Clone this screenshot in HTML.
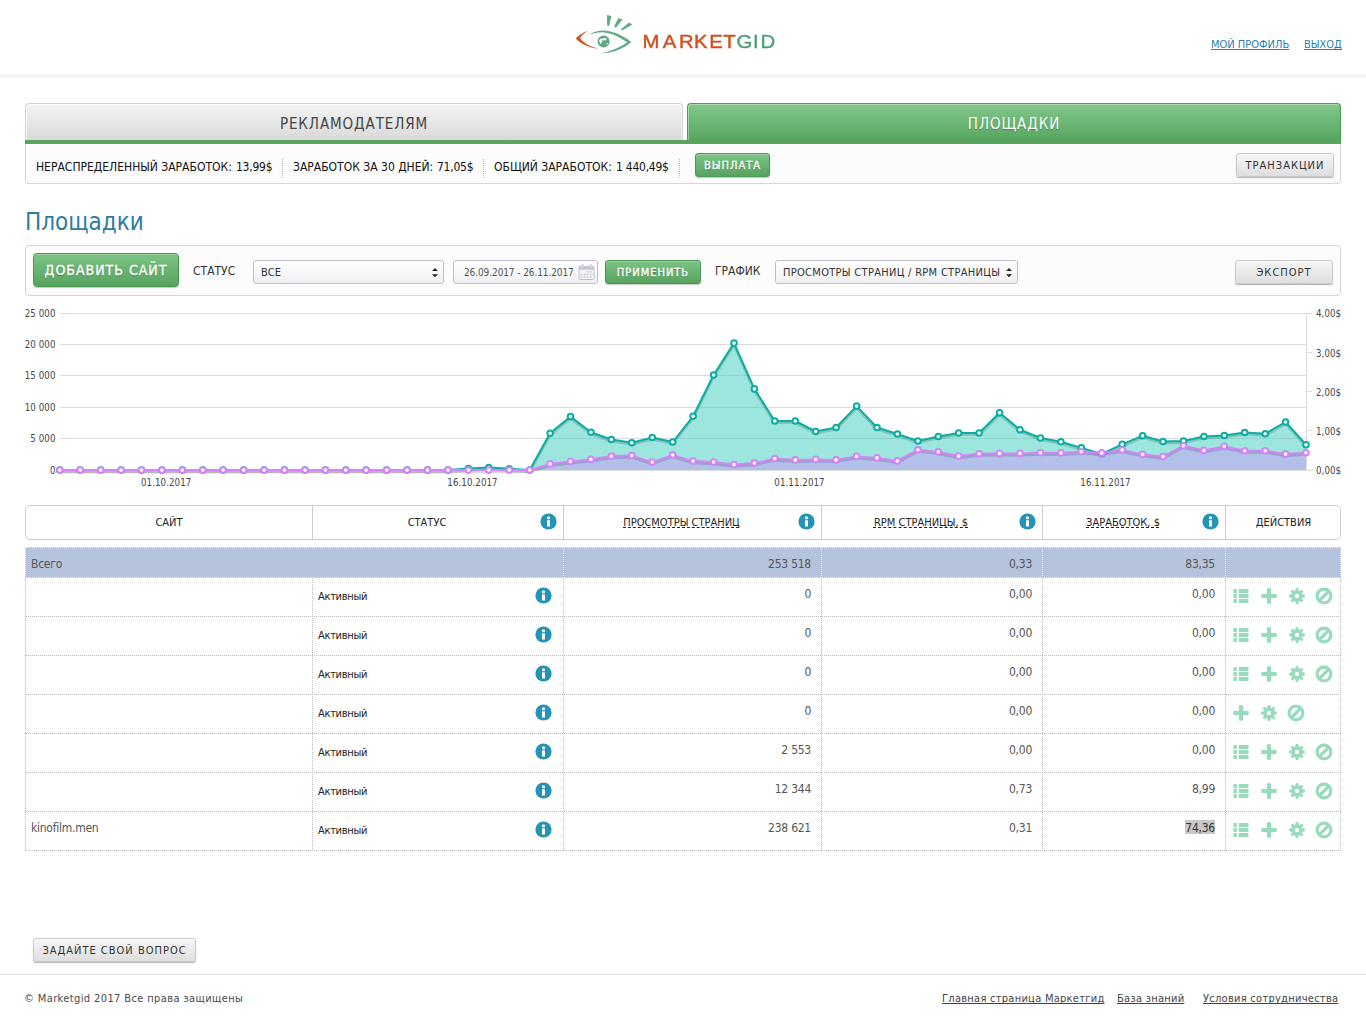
<!DOCTYPE html>
<html lang="ru">
<head>
<meta charset="utf-8">
<title>Площадки — Marketgid</title>
<style>
*{box-sizing:border-box;margin:0;padding:0}
html,body{width:1366px;height:1024px;overflow:hidden;background:#fff}
body{font-family:"DejaVu Sans Condensed","Liberation Sans",sans-serif;font-size:12px;color:#222;position:relative}
.abs{position:absolute;white-space:nowrap}
a{color:#2a7fa8;text-decoration-skip-ink:none}
#band{left:0;top:74px;width:1366px;height:4px;background:#f4f4f4}
#toplinks a{position:absolute;top:37px;font-size:11px;line-height:16px;color:#2a7fa8;text-decoration:underline;white-space:nowrap}
/* tabs */
#tab1{left:25px;top:103px;width:658px;height:37px;border:1px solid #d2d2d2;border-bottom:0;border-radius:4px 4px 0 0;background:linear-gradient(#f4f4f4,#d9d9d9);box-shadow:inset 1px 1px 0 rgba(255,255,255,.7),inset -1px 0 0 rgba(255,255,255,.5);text-align:center;font-size:15px;letter-spacing:.9px;line-height:41px;color:#444}
#tab2{left:687px;top:103px;width:654px;height:37px;border:1px solid #4c9a55;border-bottom:0;border-radius:4px 4px 0 0;background:linear-gradient(#81c78a,#58a660);box-shadow:inset 1px 1px 0 rgba(255,255,255,.35);text-align:center;font-size:15px;letter-spacing:.9px;line-height:41px;color:#fff;text-shadow:0 1px 1px rgba(0,0,0,.25)}
#gbar{left:25px;top:140px;width:1316px;height:4px;background:#57a55f}
#stats{left:25px;top:144px;width:1316px;height:40px;border:1px solid #d6d6d6;border-top:0;border-radius:0 0 4px 4px;background:#fcfcfc}
.nv{letter-spacing:-.25px}.st{top:159px;line-height:16px;font-size:12px;color:#111}
.sep{top:159px;width:0;height:19px;border-left:1px dotted #a9b6d4}
.gbtn{border:1px solid #4a9652;border-radius:3px;background:linear-gradient(#7cc485,#56a35e);color:#fff;text-align:center;letter-spacing:1px;text-shadow:0 1px 1px rgba(0,0,0,.35);-webkit-text-stroke:.35px #fff;box-shadow:inset 0 1px 0 rgba(255,255,255,.22),0 1px 1px rgba(0,0,0,.22)}
.wbtn{border:1px solid #c9c9c9;border-radius:3px;background:linear-gradient(#f6f6f6,#dedede);color:#333;text-align:center;letter-spacing:1px;box-shadow:inset 0 1px 0 rgba(255,255,255,.6),0 1px 1px rgba(0,0,0,.3)}
h1{position:absolute;left:25px;top:206px;font-size:24px;line-height:32px;font-weight:normal;color:#2b7ca3;white-space:nowrap}
#tools{left:25px;top:245px;width:1316px;height:51px;border:1px solid #d6d6d6;border-radius:4px;background:#fcfcfc}
.lbl{font-size:12px;line-height:16px;color:#333;top:263px}
.sel{top:260px;height:24px;border:1px solid #bebeca;border-radius:3px;background:linear-gradient(#fff,#f0f0f3);font-size:11px;line-height:23px;color:#333;padding-left:7px}
.arr{position:absolute;right:5px;top:6.8px;width:6px;height:9.2px}
/* table */
#thead{left:25px;top:505px;width:1316px;height:35px;border:1px solid #cdcdcd;border-radius:5px;background:#fff}
.th{top:506px;height:33px;line-height:34px;font-size:11px;color:#222;text-align:center}
.th span{text-decoration-skip-ink:none;text-decoration:underline dashed;text-decoration-thickness:1px;text-underline-offset:1px}
.vd{top:506px;width:1px;height:33px;background:#cdcdcd}
.row{left:25px;width:1316px;height:39px}
.hl{left:25px;width:1316px;height:0;border-top:1px dotted #bdbdbd}
.vl{width:0;border-left:1px dotted #bdbdbd}
.c{font-size:12px;line-height:16px;color:#555;text-align:right;letter-spacing:-.25px}
.s{font-size:11px;line-height:16px;color:#222;letter-spacing:-.3px}
#foot a{color:#444}
</style>
</head>
<body>
<svg class="abs" style="left:560px;top:0;will-change:transform" width="240" height="70" viewBox="560 0 240 70">
<path d="M587.6 30.6 C582.6 33 578.6 35.8 575.7 38.5 C581 44 589 47.8 598.4 48.7 C590 46.6 583.6 43 580 38.3 C582 35.4 584.6 32.8 587.6 30.6Z" fill="#d2541f"/>
<path d="M589 34.8 C594 31.6 599.5 30.4 604.5 30.6 C614 31.2 622.5 35.6 631.3 42 C623 49 612 53.4 600.6 53.2 C610 51.7 619.5 47.8 627.3 42.2 C619.5 37 612.5 33.3 604.5 32.4 C599 32 594 33 589 34.8Z" fill="#5fa985"/>
<circle cx="603.6" cy="41.5" r="6" fill="#5fa985"/>
<path d="M599 40.4Q599.6 39.2 600.7 38.7L606.7 38.1L605.7 40.4L604.9 40.6L603.2 40.2L602.2 40.6L601.6 42.9L600.6 44.3L599.9 42.2ZM605.9 44.3L607.5 43.1L608.1 44.5Z" fill="#fff"/>
<path d="M606.9 14.9L611.5 15.9L609 25.9L607.2 25.7Z" fill="#62ab87"/>
<path d="M618.2 18L622.6 19.5L615.9 27.7L614.1 26.7Z" fill="#62ab87"/>
<path d="M629 22.6L632.3 24.4L622.3 30.6L621 29.3Z" fill="#62ab87"/>
<text transform="scale(1 .935)" y="51.44" font-family="'Liberation Sans',sans-serif" font-size="20.3" stroke-width=".45"><tspan fill="#cf4f1d" stroke="#cf4f1d" x="642.4 662.8 678.9 694 709.3 723.3">MARKET</tspan><tspan fill="#4f9f77" stroke="#4f9f77" x="736.6 752.9 760.6">GID</tspan></text>
</svg>
<div id="toplinks"><a style="left:1211px">МОЙ ПРОФИЛЬ</a><a style="left:1304px">ВЫХОД</a></div>
<div id="band" class="abs"></div>
<div id="tab1" class="abs">РЕКЛАМОДАТЕЛЯМ</div>
<div id="gbar" class="abs"></div>
<div id="tab2" class="abs">ПЛОЩАДКИ</div>
<div id="stats" class="abs"></div>
<div class="abs st" style="left:36px">НЕРАСПРЕДЕЛЕННЫЙ ЗАРАБОТОК:</div><div class="abs st nv" id="v1" style="left:236px">13,99$</div>
<div class="abs sep" style="left:282px"></div>
<div class="abs st" style="left:293px">ЗАРАБОТОК ЗА 30 ДНЕЙ:</div><div class="abs st nv" id="v2" style="left:437px">71,05$</div>
<div class="abs sep" style="left:483px"></div>
<div class="abs st" style="left:494px">ОБЩИЙ ЗАРАБОТОК:</div><div class="abs st nv" id="v3" style="left:616px">1 440,49$</div>
<div class="abs sep" style="left:679px"></div>
<div class="abs gbtn" style="left:695px;top:153px;width:75px;height:24px;font-size:11px;line-height:24px">ВЫПЛАТА</div>
<div class="abs wbtn" style="left:1236px;top:153px;width:98px;height:24px;font-size:11px;line-height:24px">ТРАНЗАКЦИИ</div>
<h1>Площадки</h1>
<div id="tools" class="abs"></div>
<div class="abs gbtn" style="left:33px;top:253px;width:146px;height:34px;font-size:14px;line-height:32px;border-radius:4px">ДОБАВИТЬ САЙТ</div>
<div class="abs lbl" style="left:193px">СТАТУС</div>
<div class="abs sel" style="left:253px;width:191px">ВСЕ<svg class="arr" viewBox="0 0 6 9.2"><path d="M3 0L6 3H0zM3 9.2L0 6.2h6z" fill="#222"/></svg></div>
<div class="abs sel" style="left:453px;width:145px;font-size:10px;padding-left:10px;letter-spacing:-.1px;color:#555">26.09.2017 - 26.11.2017
<svg style="position:absolute;left:124px;top:3px" width="17" height="17" viewBox="0 0 17 17"><rect x="1" y="2.5" width="15" height="13" rx="1.2" fill="#f5f5f8" stroke="#c1c1cd"/><rect x="1" y="2.3" width="15" height="3.4" fill="#c3c3ce"/><rect x="3.6" y=".4" width="2.2" height="3.8" rx="1.1" fill="#e4e4ea" stroke="#c1c1cd" stroke-width=".7"/><rect x="11.6" y=".4" width="2.2" height="3.8" rx="1.1" fill="#e4e4ea" stroke="#c1c1cd" stroke-width=".7"/><g fill="#c9c9d4"><rect x="8.6" y="6.9" width="1.8" height="1.6"/><rect x="11.7" y="6.9" width="1.8" height="1.6"/><rect x="2.5" y="9.7" width="1.8" height="1.6"/><rect x="5.6" y="9.7" width="1.8" height="1.6"/><rect x="8.6" y="9.7" width="1.8" height="1.6"/><rect x="11.7" y="9.7" width="1.8" height="1.6"/><rect x="2.5" y="12.2" width="1.8" height="1.6"/><rect x="5.6" y="12.2" width="1.8" height="1.6"/><rect x="8.6" y="12.2" width="1.8" height="1.6"/><rect x="11.7" y="12.2" width="1.8" height="1.6"/></g></svg></div>
<div class="abs gbtn" style="left:605px;top:260px;width:96px;height:24px;font-size:11px;line-height:24px">ПРИМЕНИТЬ</div>
<div class="abs lbl" style="left:715px">ГРАФИК</div>
<div class="abs sel" style="left:775px;width:243px;letter-spacing:.3px">ПРОСМОТРЫ СТРАНИЦ / RPM СТРАНИЦЫ<svg class="arr" viewBox="0 0 6 9.2"><path d="M3 0L6 3H0zM3 9.2L0 6.2h6z" fill="#222"/></svg></div>
<div class="abs wbtn" style="left:1235px;top:260px;width:98px;height:24px;font-size:11px;line-height:24px">ЭКСПОРТ</div>
<svg class="abs" style="left:0;top:300px" width="1366" height="200" viewBox="0 300 1366 200" font-family="'DejaVu Sans Condensed','Liberation Sans',sans-serif" font-size="9.6" fill="#454545" letter-spacing=".1">
<rect x="60" y="313.0" width="1247" height="1" fill="#dcdcdc"/>
<rect x="60" y="344.0" width="1247" height="1" fill="#dcdcdc"/>
<rect x="60" y="375.0" width="1247" height="1" fill="#dcdcdc"/>
<rect x="60" y="407.0" width="1247" height="1" fill="#dcdcdc"/>
<rect x="60" y="438.0" width="1247" height="1" fill="#dcdcdc"/>
<rect x="60" y="470.0" width="1247" height="1" fill="#dcdcdc"/>
<rect x="1306" y="313" width="1" height="158" fill="#dcdcdc"/>
<rect x="1306" y="313.0" width="6" height="1" fill="#dcdcdc"/>
<rect x="1306" y="352.0" width="6" height="1" fill="#dcdcdc"/>
<rect x="1306" y="391.0" width="6" height="1" fill="#dcdcdc"/>
<rect x="1306" y="430.0" width="6" height="1" fill="#dcdcdc"/>
<rect x="1306" y="470.0" width="6" height="1" fill="#dcdcdc"/>
<text x="55.5" y="317.0" text-anchor="end">25 000</text>
<text x="55.5" y="348.0" text-anchor="end">20 000</text>
<text x="55.5" y="379.0" text-anchor="end">15 000</text>
<text x="55.5" y="411.0" text-anchor="end">10 000</text>
<text x="55.5" y="442.0" text-anchor="end">5 000</text>
<text x="55.5" y="474.0" text-anchor="end">0</text>
<text x="1316" y="317.0">4,00$</text>
<text x="1316" y="356.5">3,00$</text>
<text x="1316" y="396.1">2,00$</text>
<text x="1316" y="435.2">1,00$</text>
<text x="1316" y="474.2">0,00$</text>
<text x="166.2" y="485.8" text-anchor="middle">01.10.2017</text>
<text x="472.5" y="485.8" text-anchor="middle">16.10.2017</text>
<text x="799.5" y="485.8" text-anchor="middle">01.11.2017</text>
<text x="1105.5" y="485.8" text-anchor="middle">16.11.2017</text>
<path d="M59.8 470.1 L80.2 470.1 L100.7 470.1 L121.1 470.1 L141.5 470.1 L161.9 470.1 L182.4 470.1 L202.8 470.1 L223.2 470.1 L243.7 470.1 L264.1 470.1 L284.5 470.1 L305.0 470.1 L325.4 470.1 L345.8 470.1 L366.2 470.1 L386.7 470.1 L407.1 470.1 L427.5 470.1 L448.0 470.1 L468.4 468.6 L488.8 467.5 L509.3 468.8 L529.7 470.1 L550.1 433.2 L570.5 416.6 L591.0 432.2 L611.4 439.5 L631.8 442.7 L652.3 437.5 L672.7 442.0 L693.1 416.3 L713.6 375.0 L734.0 343.1 L754.4 388.9 L774.8 421.0 L795.3 421.0 L815.7 431.5 L836.1 427.5 L856.6 406.1 L877.0 427.5 L897.4 434.0 L917.9 441.0 L938.3 436.5 L958.7 433.0 L979.1 433.0 L999.6 412.8 L1020.0 429.8 L1040.4 438.0 L1060.9 441.7 L1081.3 447.9 L1101.7 453.9 L1122.2 444.4 L1142.6 435.7 L1163.0 441.5 L1183.5 441.0 L1203.9 436.5 L1224.3 435.5 L1244.7 432.5 L1265.2 433.7 L1285.6 422.0 L1306.0 444.7 L1306.0 470.1 L59.8 470.1 Z" fill="rgba(60,205,190,.5)"/>
<path d="M59.8 470.1 L80.2 470.1 L100.7 470.1 L121.1 470.1 L141.5 470.1 L161.9 470.1 L182.4 470.1 L202.8 470.1 L223.2 470.1 L243.7 470.1 L264.1 470.1 L284.5 470.1 L305.0 470.1 L325.4 470.1 L345.8 470.1 L366.2 470.1 L386.7 470.1 L407.1 470.1 L427.5 470.1 L448.0 470.1 L468.4 468.6 L488.8 467.5 L509.3 468.8 L529.7 470.1 L550.1 433.2 L570.5 416.6 L591.0 432.2 L611.4 439.5 L631.8 442.7 L652.3 437.5 L672.7 442.0 L693.1 416.3 L713.6 375.0 L734.0 343.1 L754.4 388.9 L774.8 421.0 L795.3 421.0 L815.7 431.5 L836.1 427.5 L856.6 406.1 L877.0 427.5 L897.4 434.0 L917.9 441.0 L938.3 436.5 L958.7 433.0 L979.1 433.0 L999.6 412.8 L1020.0 429.8 L1040.4 438.0 L1060.9 441.7 L1081.3 447.9 L1101.7 453.9 L1122.2 444.4 L1142.6 435.7 L1163.0 441.5 L1183.5 441.0 L1203.9 436.5 L1224.3 435.5 L1244.7 432.5 L1265.2 433.7 L1285.6 422.0 L1306.0 444.7" transform="translate(0,1.6)" fill="none" stroke="rgba(0,0,0,.15)" stroke-width="3" stroke-linejoin="round"/>
<path d="M59.8 470.1 L80.2 470.1 L100.7 470.1 L121.1 470.1 L141.5 470.1 L161.9 470.1 L182.4 470.1 L202.8 470.1 L223.2 470.1 L243.7 470.1 L264.1 470.1 L284.5 470.1 L305.0 470.1 L325.4 470.1 L345.8 470.1 L366.2 470.1 L386.7 470.1 L407.1 470.1 L427.5 470.1 L448.0 470.1 L468.4 468.6 L488.8 467.5 L509.3 468.8 L529.7 470.1 L550.1 433.2 L570.5 416.6 L591.0 432.2 L611.4 439.5 L631.8 442.7 L652.3 437.5 L672.7 442.0 L693.1 416.3 L713.6 375.0 L734.0 343.1 L754.4 388.9 L774.8 421.0 L795.3 421.0 L815.7 431.5 L836.1 427.5 L856.6 406.1 L877.0 427.5 L897.4 434.0 L917.9 441.0 L938.3 436.5 L958.7 433.0 L979.1 433.0 L999.6 412.8 L1020.0 429.8 L1040.4 438.0 L1060.9 441.7 L1081.3 447.9 L1101.7 453.9 L1122.2 444.4 L1142.6 435.7 L1163.0 441.5 L1183.5 441.0 L1203.9 436.5 L1224.3 435.5 L1244.7 432.5 L1265.2 433.7 L1285.6 422.0 L1306.0 444.7" fill="none" stroke="#0aaea2" stroke-width="2" stroke-linejoin="round"/>
<g fill="#fff" stroke="#0aaea2" stroke-width="2"><circle cx="59.8" cy="470.1" r="2.8"/><circle cx="80.2" cy="470.1" r="2.8"/><circle cx="100.7" cy="470.1" r="2.8"/><circle cx="121.1" cy="470.1" r="2.8"/><circle cx="141.5" cy="470.1" r="2.8"/><circle cx="161.9" cy="470.1" r="2.8"/><circle cx="182.4" cy="470.1" r="2.8"/><circle cx="202.8" cy="470.1" r="2.8"/><circle cx="223.2" cy="470.1" r="2.8"/><circle cx="243.7" cy="470.1" r="2.8"/><circle cx="264.1" cy="470.1" r="2.8"/><circle cx="284.5" cy="470.1" r="2.8"/><circle cx="305.0" cy="470.1" r="2.8"/><circle cx="325.4" cy="470.1" r="2.8"/><circle cx="345.8" cy="470.1" r="2.8"/><circle cx="366.2" cy="470.1" r="2.8"/><circle cx="386.7" cy="470.1" r="2.8"/><circle cx="407.1" cy="470.1" r="2.8"/><circle cx="427.5" cy="470.1" r="2.8"/><circle cx="448.0" cy="470.1" r="2.8"/><circle cx="468.4" cy="468.6" r="2.8"/><circle cx="488.8" cy="467.5" r="2.8"/><circle cx="509.3" cy="468.8" r="2.8"/><circle cx="529.7" cy="470.1" r="2.8"/><circle cx="550.1" cy="433.2" r="2.8"/><circle cx="570.5" cy="416.6" r="2.8"/><circle cx="591.0" cy="432.2" r="2.8"/><circle cx="611.4" cy="439.5" r="2.8"/><circle cx="631.8" cy="442.7" r="2.8"/><circle cx="652.3" cy="437.5" r="2.8"/><circle cx="672.7" cy="442.0" r="2.8"/><circle cx="693.1" cy="416.3" r="2.8"/><circle cx="713.6" cy="375.0" r="2.8"/><circle cx="734.0" cy="343.1" r="2.8"/><circle cx="754.4" cy="388.9" r="2.8"/><circle cx="774.8" cy="421.0" r="2.8"/><circle cx="795.3" cy="421.0" r="2.8"/><circle cx="815.7" cy="431.5" r="2.8"/><circle cx="836.1" cy="427.5" r="2.8"/><circle cx="856.6" cy="406.1" r="2.8"/><circle cx="877.0" cy="427.5" r="2.8"/><circle cx="897.4" cy="434.0" r="2.8"/><circle cx="917.9" cy="441.0" r="2.8"/><circle cx="938.3" cy="436.5" r="2.8"/><circle cx="958.7" cy="433.0" r="2.8"/><circle cx="979.1" cy="433.0" r="2.8"/><circle cx="999.6" cy="412.8" r="2.8"/><circle cx="1020.0" cy="429.8" r="2.8"/><circle cx="1040.4" cy="438.0" r="2.8"/><circle cx="1060.9" cy="441.7" r="2.8"/><circle cx="1081.3" cy="447.9" r="2.8"/><circle cx="1101.7" cy="453.9" r="2.8"/><circle cx="1122.2" cy="444.4" r="2.8"/><circle cx="1142.6" cy="435.7" r="2.8"/><circle cx="1163.0" cy="441.5" r="2.8"/><circle cx="1183.5" cy="441.0" r="2.8"/><circle cx="1203.9" cy="436.5" r="2.8"/><circle cx="1224.3" cy="435.5" r="2.8"/><circle cx="1244.7" cy="432.5" r="2.8"/><circle cx="1265.2" cy="433.7" r="2.8"/><circle cx="1285.6" cy="422.0" r="2.8"/><circle cx="1306.0" cy="444.7" r="2.8"/></g>
<path d="M59.8 470.1 L80.2 470.1 L100.7 470.1 L121.1 470.1 L141.5 470.1 L161.9 470.1 L182.4 470.1 L202.8 470.1 L223.2 470.1 L243.7 470.1 L264.1 470.1 L284.5 470.1 L305.0 470.1 L325.4 470.1 L345.8 470.1 L366.2 470.1 L386.7 470.1 L407.1 470.1 L427.5 470.1 L448.0 470.1 L468.4 470.1 L488.8 470.1 L509.3 470.1 L529.7 470.1 L550.1 463.9 L570.5 461.4 L591.0 459.4 L611.4 456.1 L631.8 455.6 L652.3 462.1 L672.7 455.1 L693.1 461.1 L713.6 462.1 L734.0 464.6 L754.4 463.1 L774.8 458.6 L795.3 459.9 L815.7 459.4 L836.1 459.9 L856.6 456.4 L877.0 457.9 L897.4 460.9 L917.9 449.7 L938.3 451.9 L958.7 456.1 L979.1 453.7 L999.6 453.4 L1020.0 453.4 L1040.4 452.7 L1060.9 452.9 L1081.3 451.7 L1101.7 452.9 L1122.2 449.9 L1142.6 454.4 L1163.0 456.6 L1183.5 445.7 L1203.9 450.4 L1224.3 446.4 L1244.7 450.7 L1265.2 450.7 L1285.6 454.1 L1306.0 452.7 L1306.0 470.1 L59.8 470.1 Z" fill="rgba(200,153,246,.5)"/>
<path d="M59.8 470.1 L80.2 470.1 L100.7 470.1 L121.1 470.1 L141.5 470.1 L161.9 470.1 L182.4 470.1 L202.8 470.1 L223.2 470.1 L243.7 470.1 L264.1 470.1 L284.5 470.1 L305.0 470.1 L325.4 470.1 L345.8 470.1 L366.2 470.1 L386.7 470.1 L407.1 470.1 L427.5 470.1 L448.0 470.1 L468.4 470.1 L488.8 470.1 L509.3 470.1 L529.7 470.1 L550.1 463.9 L570.5 461.4 L591.0 459.4 L611.4 456.1 L631.8 455.6 L652.3 462.1 L672.7 455.1 L693.1 461.1 L713.6 462.1 L734.0 464.6 L754.4 463.1 L774.8 458.6 L795.3 459.9 L815.7 459.4 L836.1 459.9 L856.6 456.4 L877.0 457.9 L897.4 460.9 L917.9 449.7 L938.3 451.9 L958.7 456.1 L979.1 453.7 L999.6 453.4 L1020.0 453.4 L1040.4 452.7 L1060.9 452.9 L1081.3 451.7 L1101.7 452.9 L1122.2 449.9 L1142.6 454.4 L1163.0 456.6 L1183.5 445.7 L1203.9 450.4 L1224.3 446.4 L1244.7 450.7 L1265.2 450.7 L1285.6 454.1 L1306.0 452.7" transform="translate(0,1.6)" fill="none" stroke="rgba(0,0,0,.15)" stroke-width="3" stroke-linejoin="round"/>
<path d="M59.8 470.1 L80.2 470.1 L100.7 470.1 L121.1 470.1 L141.5 470.1 L161.9 470.1 L182.4 470.1 L202.8 470.1 L223.2 470.1 L243.7 470.1 L264.1 470.1 L284.5 470.1 L305.0 470.1 L325.4 470.1 L345.8 470.1 L366.2 470.1 L386.7 470.1 L407.1 470.1 L427.5 470.1 L448.0 470.1 L468.4 470.1 L488.8 470.1 L509.3 470.1 L529.7 470.1 L550.1 463.9 L570.5 461.4 L591.0 459.4 L611.4 456.1 L631.8 455.6 L652.3 462.1 L672.7 455.1 L693.1 461.1 L713.6 462.1 L734.0 464.6 L754.4 463.1 L774.8 458.6 L795.3 459.9 L815.7 459.4 L836.1 459.9 L856.6 456.4 L877.0 457.9 L897.4 460.9 L917.9 449.7 L938.3 451.9 L958.7 456.1 L979.1 453.7 L999.6 453.4 L1020.0 453.4 L1040.4 452.7 L1060.9 452.9 L1081.3 451.7 L1101.7 452.9 L1122.2 449.9 L1142.6 454.4 L1163.0 456.6 L1183.5 445.7 L1203.9 450.4 L1224.3 446.4 L1244.7 450.7 L1265.2 450.7 L1285.6 454.1 L1306.0 452.7" fill="none" stroke="#d682fa" stroke-width="2" stroke-linejoin="round"/>
<g fill="#fff" stroke="#d682fa" stroke-width="2"><circle cx="59.8" cy="470.1" r="2.8"/><circle cx="80.2" cy="470.1" r="2.8"/><circle cx="100.7" cy="470.1" r="2.8"/><circle cx="121.1" cy="470.1" r="2.8"/><circle cx="141.5" cy="470.1" r="2.8"/><circle cx="161.9" cy="470.1" r="2.8"/><circle cx="182.4" cy="470.1" r="2.8"/><circle cx="202.8" cy="470.1" r="2.8"/><circle cx="223.2" cy="470.1" r="2.8"/><circle cx="243.7" cy="470.1" r="2.8"/><circle cx="264.1" cy="470.1" r="2.8"/><circle cx="284.5" cy="470.1" r="2.8"/><circle cx="305.0" cy="470.1" r="2.8"/><circle cx="325.4" cy="470.1" r="2.8"/><circle cx="345.8" cy="470.1" r="2.8"/><circle cx="366.2" cy="470.1" r="2.8"/><circle cx="386.7" cy="470.1" r="2.8"/><circle cx="407.1" cy="470.1" r="2.8"/><circle cx="427.5" cy="470.1" r="2.8"/><circle cx="448.0" cy="470.1" r="2.8"/><circle cx="468.4" cy="470.1" r="2.8"/><circle cx="488.8" cy="470.1" r="2.8"/><circle cx="509.3" cy="470.1" r="2.8"/><circle cx="529.7" cy="470.1" r="2.8"/><circle cx="550.1" cy="463.9" r="2.8"/><circle cx="570.5" cy="461.4" r="2.8"/><circle cx="591.0" cy="459.4" r="2.8"/><circle cx="611.4" cy="456.1" r="2.8"/><circle cx="631.8" cy="455.6" r="2.8"/><circle cx="652.3" cy="462.1" r="2.8"/><circle cx="672.7" cy="455.1" r="2.8"/><circle cx="693.1" cy="461.1" r="2.8"/><circle cx="713.6" cy="462.1" r="2.8"/><circle cx="734.0" cy="464.6" r="2.8"/><circle cx="754.4" cy="463.1" r="2.8"/><circle cx="774.8" cy="458.6" r="2.8"/><circle cx="795.3" cy="459.9" r="2.8"/><circle cx="815.7" cy="459.4" r="2.8"/><circle cx="836.1" cy="459.9" r="2.8"/><circle cx="856.6" cy="456.4" r="2.8"/><circle cx="877.0" cy="457.9" r="2.8"/><circle cx="897.4" cy="460.9" r="2.8"/><circle cx="917.9" cy="449.7" r="2.8"/><circle cx="938.3" cy="451.9" r="2.8"/><circle cx="958.7" cy="456.1" r="2.8"/><circle cx="979.1" cy="453.7" r="2.8"/><circle cx="999.6" cy="453.4" r="2.8"/><circle cx="1020.0" cy="453.4" r="2.8"/><circle cx="1040.4" cy="452.7" r="2.8"/><circle cx="1060.9" cy="452.9" r="2.8"/><circle cx="1081.3" cy="451.7" r="2.8"/><circle cx="1101.7" cy="452.9" r="2.8"/><circle cx="1122.2" cy="449.9" r="2.8"/><circle cx="1142.6" cy="454.4" r="2.8"/><circle cx="1163.0" cy="456.6" r="2.8"/><circle cx="1183.5" cy="445.7" r="2.8"/><circle cx="1203.9" cy="450.4" r="2.8"/><circle cx="1224.3" cy="446.4" r="2.8"/><circle cx="1244.7" cy="450.7" r="2.8"/><circle cx="1265.2" cy="450.7" r="2.8"/><circle cx="1285.6" cy="454.1" r="2.8"/><circle cx="1306.0" cy="452.7" r="2.8"/></g>
</svg>
<div id="thead" class="abs"></div>
<div class="abs vd" style="left:312px"></div>
<div class="abs vd" style="left:563px"></div>
<div class="abs vd" style="left:821px"></div>
<div class="abs vd" style="left:1042px"></div>
<div class="abs vd" style="left:1225px"></div>
<div class="abs th" style="left:26px;width:286px;padding-right:0px">САЙТ</div>
<div class="abs th" style="left:313px;width:250px;padding-right:22px">СТАТУС</div>
<div class="abs th" style="left:564px;width:257px;padding-right:22px"><span>ПРОСМОТРЫ СТРАНИЦ</span></div>
<div class="abs th" style="left:822px;width:220px;padding-right:22px"><span>RPM СТРАНИЦЫ, $</span></div>
<div class="abs th" style="left:1043px;width:182px;padding-right:22px"><span>ЗАРАБОТОК, $</span></div>
<div class="abs th" style="left:1226px;width:115px;padding-right:0px">ДЕЙСТВИЯ</div>
<svg class="abs" style="left:540px;top:513px" width="17" height="17" viewBox="0 0 17 17"><circle cx="8.5" cy="8.5" r="8.1" fill="#2592b7"/><rect x="7" y="3.6" width="3" height="2.6" rx=".8" fill="#fff"/><rect x="7" y="7.2" width="3" height="6.2" rx=".5" fill="#fff"/></svg>
<svg class="abs" style="left:798px;top:513px" width="17" height="17" viewBox="0 0 17 17"><circle cx="8.5" cy="8.5" r="8.1" fill="#2592b7"/><rect x="7" y="3.6" width="3" height="2.6" rx=".8" fill="#fff"/><rect x="7" y="7.2" width="3" height="6.2" rx=".5" fill="#fff"/></svg>
<svg class="abs" style="left:1019px;top:513px" width="17" height="17" viewBox="0 0 17 17"><circle cx="8.5" cy="8.5" r="8.1" fill="#2592b7"/><rect x="7" y="3.6" width="3" height="2.6" rx=".8" fill="#fff"/><rect x="7" y="7.2" width="3" height="6.2" rx=".5" fill="#fff"/></svg>
<svg class="abs" style="left:1202px;top:513px" width="17" height="17" viewBox="0 0 17 17"><circle cx="8.5" cy="8.5" r="8.1" fill="#2592b7"/><rect x="7" y="3.6" width="3" height="2.6" rx=".8" fill="#fff"/><rect x="7" y="7.2" width="3" height="6.2" rx=".5" fill="#fff"/></svg>
<div class="abs" style="left:25px;top:547px;width:1316px;height:31px;background:#b5c3dc"></div>
<div class="abs hl" style="top:547px;border-color:#e8ecf4"></div>
<div class="abs hl" style="top:577px;border-color:#e8ecf4"></div>
<div class="abs vl" style="left:25px;top:547px;height:31px;border-color:#e8ecf4"></div>
<div class="abs vl" style="left:563px;top:547px;height:31px;border-color:#e8ecf4"></div>
<div class="abs vl" style="left:821px;top:547px;height:31px;border-color:#e8ecf4"></div>
<div class="abs vl" style="left:1042px;top:547px;height:31px;border-color:#e8ecf4"></div>
<div class="abs vl" style="left:1225px;top:547px;height:31px;border-color:#e8ecf4"></div>
<div class="abs vl" style="left:1340px;top:547px;height:31px;border-color:#e8ecf4"></div>
<div class="abs c" style="left:31px;top:556px;text-align:left">Всего</div>
<div class="abs c" style="right:555px;top:556px">253 518</div>
<div class="abs c" style="right:334px;top:556px">0,33</div>
<div class="abs c" style="right:151px;top:556px">83,35</div>
<div class="abs hl" style="top:616px"></div>
<div class="abs s" style="left:318px;top:589px">Активный</div>
<svg class="abs" style="left:535px;top:587px" width="17" height="17" viewBox="0 0 17 17"><circle cx="8.5" cy="8.5" r="8.1" fill="#2592b7"/><rect x="7" y="3.6" width="3" height="2.6" rx=".8" fill="#fff"/><rect x="7" y="7.2" width="3" height="6.2" rx=".5" fill="#fff"/></svg>
<div class="abs c" style="right:555px;top:586px">0</div>
<div class="abs c" style="right:334px;top:586px">0,00</div>
<div class="abs c" style="right:151px;top:586px">0,00</div>
<svg class="abs" style="left:1233px;top:588px" width="16" height="16" viewBox="0 0 16 16" fill="#97dbbc"><rect x=".4" y=".9" width="3.5" height="4" rx=".6"/><rect x="5.7" y=".9" width="9.8" height="4" rx=".6"/><rect x=".4" y="6" width="3.5" height="4" rx=".6"/><rect x="5.7" y="6" width="9.8" height="4" rx=".6"/><rect x=".4" y="11.1" width="3.5" height="4" rx=".6"/><rect x="5.7" y="11.1" width="9.8" height="4" rx=".6"/></svg>
<svg class="abs" style="left:1261px;top:588px" width="16" height="16" viewBox="0 0 16 16" fill="#97dbbc"><rect x="5.9" y="0.3" width="4.2" height="15.4" rx=".8"/><rect x="0.3" y="5.9" width="15.4" height="4.2" rx=".8"/></svg>
<svg class="abs" style="left:1289px;top:588px" width="16" height="16" viewBox="0 0 16 16"><path fill="#97dbbc" fill-rule="evenodd" stroke="#97dbbc" stroke-width="1" stroke-linejoin="round" d="M6.74 2.85 L7.10 0.55 L8.90 0.55 L9.26 2.85 L10.75 3.47 L12.63 2.10 L13.90 3.37 L12.53 5.25 L13.15 6.74 L15.45 7.10 L15.45 8.90 L13.15 9.26 L12.53 10.75 L13.90 12.63 L12.63 13.90 L10.75 12.53 L9.26 13.15 L8.90 15.45 L7.10 15.45 L6.74 13.15 L5.25 12.53 L3.37 13.90 L2.10 12.63 L3.47 10.75 L2.85 9.26 L0.55 8.90 L0.55 7.10 L2.85 6.74 L3.47 5.25 L2.10 3.37 L3.37 2.10 L5.25 3.47Z M8 5.3 A2.7 2.7 0 1 0 8 10.7 A2.7 2.7 0 1 0 8 5.3Z"/></svg>
<svg class="abs" style="left:1315px;top:587px" width="18" height="18" viewBox="0 0 18 18"><circle cx="9" cy="9" r="6.9" fill="none" stroke="#97dbbc" stroke-width="3.1"/><path d="M13.6 4.4L4.4 13.6" stroke="#97dbbc" stroke-width="3.3"/></svg>
<div class="abs hl" style="top:655px"></div>
<div class="abs s" style="left:318px;top:628px">Активный</div>
<svg class="abs" style="left:535px;top:626px" width="17" height="17" viewBox="0 0 17 17"><circle cx="8.5" cy="8.5" r="8.1" fill="#2592b7"/><rect x="7" y="3.6" width="3" height="2.6" rx=".8" fill="#fff"/><rect x="7" y="7.2" width="3" height="6.2" rx=".5" fill="#fff"/></svg>
<div class="abs c" style="right:555px;top:625px">0</div>
<div class="abs c" style="right:334px;top:625px">0,00</div>
<div class="abs c" style="right:151px;top:625px">0,00</div>
<svg class="abs" style="left:1233px;top:627px" width="16" height="16" viewBox="0 0 16 16" fill="#97dbbc"><rect x=".4" y=".9" width="3.5" height="4" rx=".6"/><rect x="5.7" y=".9" width="9.8" height="4" rx=".6"/><rect x=".4" y="6" width="3.5" height="4" rx=".6"/><rect x="5.7" y="6" width="9.8" height="4" rx=".6"/><rect x=".4" y="11.1" width="3.5" height="4" rx=".6"/><rect x="5.7" y="11.1" width="9.8" height="4" rx=".6"/></svg>
<svg class="abs" style="left:1261px;top:627px" width="16" height="16" viewBox="0 0 16 16" fill="#97dbbc"><rect x="5.9" y="0.3" width="4.2" height="15.4" rx=".8"/><rect x="0.3" y="5.9" width="15.4" height="4.2" rx=".8"/></svg>
<svg class="abs" style="left:1289px;top:627px" width="16" height="16" viewBox="0 0 16 16"><path fill="#97dbbc" fill-rule="evenodd" stroke="#97dbbc" stroke-width="1" stroke-linejoin="round" d="M6.74 2.85 L7.10 0.55 L8.90 0.55 L9.26 2.85 L10.75 3.47 L12.63 2.10 L13.90 3.37 L12.53 5.25 L13.15 6.74 L15.45 7.10 L15.45 8.90 L13.15 9.26 L12.53 10.75 L13.90 12.63 L12.63 13.90 L10.75 12.53 L9.26 13.15 L8.90 15.45 L7.10 15.45 L6.74 13.15 L5.25 12.53 L3.37 13.90 L2.10 12.63 L3.47 10.75 L2.85 9.26 L0.55 8.90 L0.55 7.10 L2.85 6.74 L3.47 5.25 L2.10 3.37 L3.37 2.10 L5.25 3.47Z M8 5.3 A2.7 2.7 0 1 0 8 10.7 A2.7 2.7 0 1 0 8 5.3Z"/></svg>
<svg class="abs" style="left:1315px;top:626px" width="18" height="18" viewBox="0 0 18 18"><circle cx="9" cy="9" r="6.9" fill="none" stroke="#97dbbc" stroke-width="3.1"/><path d="M13.6 4.4L4.4 13.6" stroke="#97dbbc" stroke-width="3.3"/></svg>
<div class="abs hl" style="top:694px"></div>
<div class="abs s" style="left:318px;top:667px">Активный</div>
<svg class="abs" style="left:535px;top:665px" width="17" height="17" viewBox="0 0 17 17"><circle cx="8.5" cy="8.5" r="8.1" fill="#2592b7"/><rect x="7" y="3.6" width="3" height="2.6" rx=".8" fill="#fff"/><rect x="7" y="7.2" width="3" height="6.2" rx=".5" fill="#fff"/></svg>
<div class="abs c" style="right:555px;top:664px">0</div>
<div class="abs c" style="right:334px;top:664px">0,00</div>
<div class="abs c" style="right:151px;top:664px">0,00</div>
<svg class="abs" style="left:1233px;top:666px" width="16" height="16" viewBox="0 0 16 16" fill="#97dbbc"><rect x=".4" y=".9" width="3.5" height="4" rx=".6"/><rect x="5.7" y=".9" width="9.8" height="4" rx=".6"/><rect x=".4" y="6" width="3.5" height="4" rx=".6"/><rect x="5.7" y="6" width="9.8" height="4" rx=".6"/><rect x=".4" y="11.1" width="3.5" height="4" rx=".6"/><rect x="5.7" y="11.1" width="9.8" height="4" rx=".6"/></svg>
<svg class="abs" style="left:1261px;top:666px" width="16" height="16" viewBox="0 0 16 16" fill="#97dbbc"><rect x="5.9" y="0.3" width="4.2" height="15.4" rx=".8"/><rect x="0.3" y="5.9" width="15.4" height="4.2" rx=".8"/></svg>
<svg class="abs" style="left:1289px;top:666px" width="16" height="16" viewBox="0 0 16 16"><path fill="#97dbbc" fill-rule="evenodd" stroke="#97dbbc" stroke-width="1" stroke-linejoin="round" d="M6.74 2.85 L7.10 0.55 L8.90 0.55 L9.26 2.85 L10.75 3.47 L12.63 2.10 L13.90 3.37 L12.53 5.25 L13.15 6.74 L15.45 7.10 L15.45 8.90 L13.15 9.26 L12.53 10.75 L13.90 12.63 L12.63 13.90 L10.75 12.53 L9.26 13.15 L8.90 15.45 L7.10 15.45 L6.74 13.15 L5.25 12.53 L3.37 13.90 L2.10 12.63 L3.47 10.75 L2.85 9.26 L0.55 8.90 L0.55 7.10 L2.85 6.74 L3.47 5.25 L2.10 3.37 L3.37 2.10 L5.25 3.47Z M8 5.3 A2.7 2.7 0 1 0 8 10.7 A2.7 2.7 0 1 0 8 5.3Z"/></svg>
<svg class="abs" style="left:1315px;top:665px" width="18" height="18" viewBox="0 0 18 18"><circle cx="9" cy="9" r="6.9" fill="none" stroke="#97dbbc" stroke-width="3.1"/><path d="M13.6 4.4L4.4 13.6" stroke="#97dbbc" stroke-width="3.3"/></svg>
<div class="abs hl" style="top:733px"></div>
<div class="abs s" style="left:318px;top:706px">Активный</div>
<svg class="abs" style="left:535px;top:704px" width="17" height="17" viewBox="0 0 17 17"><circle cx="8.5" cy="8.5" r="8.1" fill="#2592b7"/><rect x="7" y="3.6" width="3" height="2.6" rx=".8" fill="#fff"/><rect x="7" y="7.2" width="3" height="6.2" rx=".5" fill="#fff"/></svg>
<div class="abs c" style="right:555px;top:703px">0</div>
<div class="abs c" style="right:334px;top:703px">0,00</div>
<div class="abs c" style="right:151px;top:703px">0,00</div>
<svg class="abs" style="left:1233px;top:705px" width="16" height="16" viewBox="0 0 16 16" fill="#97dbbc"><rect x="5.9" y="0.3" width="4.2" height="15.4" rx=".8"/><rect x="0.3" y="5.9" width="15.4" height="4.2" rx=".8"/></svg>
<svg class="abs" style="left:1261px;top:705px" width="16" height="16" viewBox="0 0 16 16"><path fill="#97dbbc" fill-rule="evenodd" stroke="#97dbbc" stroke-width="1" stroke-linejoin="round" d="M6.74 2.85 L7.10 0.55 L8.90 0.55 L9.26 2.85 L10.75 3.47 L12.63 2.10 L13.90 3.37 L12.53 5.25 L13.15 6.74 L15.45 7.10 L15.45 8.90 L13.15 9.26 L12.53 10.75 L13.90 12.63 L12.63 13.90 L10.75 12.53 L9.26 13.15 L8.90 15.45 L7.10 15.45 L6.74 13.15 L5.25 12.53 L3.37 13.90 L2.10 12.63 L3.47 10.75 L2.85 9.26 L0.55 8.90 L0.55 7.10 L2.85 6.74 L3.47 5.25 L2.10 3.37 L3.37 2.10 L5.25 3.47Z M8 5.3 A2.7 2.7 0 1 0 8 10.7 A2.7 2.7 0 1 0 8 5.3Z"/></svg>
<svg class="abs" style="left:1287px;top:704px" width="18" height="18" viewBox="0 0 18 18"><circle cx="9" cy="9" r="6.9" fill="none" stroke="#97dbbc" stroke-width="3.1"/><path d="M13.6 4.4L4.4 13.6" stroke="#97dbbc" stroke-width="3.3"/></svg>
<div class="abs hl" style="top:772px"></div>
<div class="abs s" style="left:318px;top:745px">Активный</div>
<svg class="abs" style="left:535px;top:743px" width="17" height="17" viewBox="0 0 17 17"><circle cx="8.5" cy="8.5" r="8.1" fill="#2592b7"/><rect x="7" y="3.6" width="3" height="2.6" rx=".8" fill="#fff"/><rect x="7" y="7.2" width="3" height="6.2" rx=".5" fill="#fff"/></svg>
<div class="abs c" style="right:555px;top:742px">2 553</div>
<div class="abs c" style="right:334px;top:742px">0,00</div>
<div class="abs c" style="right:151px;top:742px">0,00</div>
<svg class="abs" style="left:1233px;top:744px" width="16" height="16" viewBox="0 0 16 16" fill="#97dbbc"><rect x=".4" y=".9" width="3.5" height="4" rx=".6"/><rect x="5.7" y=".9" width="9.8" height="4" rx=".6"/><rect x=".4" y="6" width="3.5" height="4" rx=".6"/><rect x="5.7" y="6" width="9.8" height="4" rx=".6"/><rect x=".4" y="11.1" width="3.5" height="4" rx=".6"/><rect x="5.7" y="11.1" width="9.8" height="4" rx=".6"/></svg>
<svg class="abs" style="left:1261px;top:744px" width="16" height="16" viewBox="0 0 16 16" fill="#97dbbc"><rect x="5.9" y="0.3" width="4.2" height="15.4" rx=".8"/><rect x="0.3" y="5.9" width="15.4" height="4.2" rx=".8"/></svg>
<svg class="abs" style="left:1289px;top:744px" width="16" height="16" viewBox="0 0 16 16"><path fill="#97dbbc" fill-rule="evenodd" stroke="#97dbbc" stroke-width="1" stroke-linejoin="round" d="M6.74 2.85 L7.10 0.55 L8.90 0.55 L9.26 2.85 L10.75 3.47 L12.63 2.10 L13.90 3.37 L12.53 5.25 L13.15 6.74 L15.45 7.10 L15.45 8.90 L13.15 9.26 L12.53 10.75 L13.90 12.63 L12.63 13.90 L10.75 12.53 L9.26 13.15 L8.90 15.45 L7.10 15.45 L6.74 13.15 L5.25 12.53 L3.37 13.90 L2.10 12.63 L3.47 10.75 L2.85 9.26 L0.55 8.90 L0.55 7.10 L2.85 6.74 L3.47 5.25 L2.10 3.37 L3.37 2.10 L5.25 3.47Z M8 5.3 A2.7 2.7 0 1 0 8 10.7 A2.7 2.7 0 1 0 8 5.3Z"/></svg>
<svg class="abs" style="left:1315px;top:743px" width="18" height="18" viewBox="0 0 18 18"><circle cx="9" cy="9" r="6.9" fill="none" stroke="#97dbbc" stroke-width="3.1"/><path d="M13.6 4.4L4.4 13.6" stroke="#97dbbc" stroke-width="3.3"/></svg>
<div class="abs hl" style="top:811px"></div>
<div class="abs s" style="left:318px;top:784px">Активный</div>
<svg class="abs" style="left:535px;top:782px" width="17" height="17" viewBox="0 0 17 17"><circle cx="8.5" cy="8.5" r="8.1" fill="#2592b7"/><rect x="7" y="3.6" width="3" height="2.6" rx=".8" fill="#fff"/><rect x="7" y="7.2" width="3" height="6.2" rx=".5" fill="#fff"/></svg>
<div class="abs c" style="right:555px;top:781px">12 344</div>
<div class="abs c" style="right:334px;top:781px">0,73</div>
<div class="abs c" style="right:151px;top:781px">8,99</div>
<svg class="abs" style="left:1233px;top:783px" width="16" height="16" viewBox="0 0 16 16" fill="#97dbbc"><rect x=".4" y=".9" width="3.5" height="4" rx=".6"/><rect x="5.7" y=".9" width="9.8" height="4" rx=".6"/><rect x=".4" y="6" width="3.5" height="4" rx=".6"/><rect x="5.7" y="6" width="9.8" height="4" rx=".6"/><rect x=".4" y="11.1" width="3.5" height="4" rx=".6"/><rect x="5.7" y="11.1" width="9.8" height="4" rx=".6"/></svg>
<svg class="abs" style="left:1261px;top:783px" width="16" height="16" viewBox="0 0 16 16" fill="#97dbbc"><rect x="5.9" y="0.3" width="4.2" height="15.4" rx=".8"/><rect x="0.3" y="5.9" width="15.4" height="4.2" rx=".8"/></svg>
<svg class="abs" style="left:1289px;top:783px" width="16" height="16" viewBox="0 0 16 16"><path fill="#97dbbc" fill-rule="evenodd" stroke="#97dbbc" stroke-width="1" stroke-linejoin="round" d="M6.74 2.85 L7.10 0.55 L8.90 0.55 L9.26 2.85 L10.75 3.47 L12.63 2.10 L13.90 3.37 L12.53 5.25 L13.15 6.74 L15.45 7.10 L15.45 8.90 L13.15 9.26 L12.53 10.75 L13.90 12.63 L12.63 13.90 L10.75 12.53 L9.26 13.15 L8.90 15.45 L7.10 15.45 L6.74 13.15 L5.25 12.53 L3.37 13.90 L2.10 12.63 L3.47 10.75 L2.85 9.26 L0.55 8.90 L0.55 7.10 L2.85 6.74 L3.47 5.25 L2.10 3.37 L3.37 2.10 L5.25 3.47Z M8 5.3 A2.7 2.7 0 1 0 8 10.7 A2.7 2.7 0 1 0 8 5.3Z"/></svg>
<svg class="abs" style="left:1315px;top:782px" width="18" height="18" viewBox="0 0 18 18"><circle cx="9" cy="9" r="6.9" fill="none" stroke="#97dbbc" stroke-width="3.1"/><path d="M13.6 4.4L4.4 13.6" stroke="#97dbbc" stroke-width="3.3"/></svg>
<div class="abs hl" style="top:850px"></div>
<div class="abs c" style="left:31px;top:820px;text-align:left">kinofilm.men</div>
<div class="abs s" style="left:318px;top:823px">Активный</div>
<svg class="abs" style="left:535px;top:821px" width="17" height="17" viewBox="0 0 17 17"><circle cx="8.5" cy="8.5" r="8.1" fill="#2592b7"/><rect x="7" y="3.6" width="3" height="2.6" rx=".8" fill="#fff"/><rect x="7" y="7.2" width="3" height="6.2" rx=".5" fill="#fff"/></svg>
<div class="abs c" style="right:555px;top:820px">238 621</div>
<div class="abs c" style="right:334px;top:820px">0,31</div>
<div class="abs c" style="right:151px;top:820px;background:#c8c8c8;line-height:16px;height:14px;color:#333">74,36</div>
<svg class="abs" style="left:1233px;top:822px" width="16" height="16" viewBox="0 0 16 16" fill="#97dbbc"><rect x=".4" y=".9" width="3.5" height="4" rx=".6"/><rect x="5.7" y=".9" width="9.8" height="4" rx=".6"/><rect x=".4" y="6" width="3.5" height="4" rx=".6"/><rect x="5.7" y="6" width="9.8" height="4" rx=".6"/><rect x=".4" y="11.1" width="3.5" height="4" rx=".6"/><rect x="5.7" y="11.1" width="9.8" height="4" rx=".6"/></svg>
<svg class="abs" style="left:1261px;top:822px" width="16" height="16" viewBox="0 0 16 16" fill="#97dbbc"><rect x="5.9" y="0.3" width="4.2" height="15.4" rx=".8"/><rect x="0.3" y="5.9" width="15.4" height="4.2" rx=".8"/></svg>
<svg class="abs" style="left:1289px;top:822px" width="16" height="16" viewBox="0 0 16 16"><path fill="#97dbbc" fill-rule="evenodd" stroke="#97dbbc" stroke-width="1" stroke-linejoin="round" d="M6.74 2.85 L7.10 0.55 L8.90 0.55 L9.26 2.85 L10.75 3.47 L12.63 2.10 L13.90 3.37 L12.53 5.25 L13.15 6.74 L15.45 7.10 L15.45 8.90 L13.15 9.26 L12.53 10.75 L13.90 12.63 L12.63 13.90 L10.75 12.53 L9.26 13.15 L8.90 15.45 L7.10 15.45 L6.74 13.15 L5.25 12.53 L3.37 13.90 L2.10 12.63 L3.47 10.75 L2.85 9.26 L0.55 8.90 L0.55 7.10 L2.85 6.74 L3.47 5.25 L2.10 3.37 L3.37 2.10 L5.25 3.47Z M8 5.3 A2.7 2.7 0 1 0 8 10.7 A2.7 2.7 0 1 0 8 5.3Z"/></svg>
<svg class="abs" style="left:1315px;top:821px" width="18" height="18" viewBox="0 0 18 18"><circle cx="9" cy="9" r="6.9" fill="none" stroke="#97dbbc" stroke-width="3.1"/><path d="M13.6 4.4L4.4 13.6" stroke="#97dbbc" stroke-width="3.3"/></svg>
<div class="abs vl" style="left:25px;top:578px;height:273px"></div>
<div class="abs vl" style="left:312px;top:578px;height:273px"></div>
<div class="abs vl" style="left:563px;top:578px;height:273px"></div>
<div class="abs vl" style="left:821px;top:578px;height:273px"></div>
<div class="abs vl" style="left:1042px;top:578px;height:273px"></div>
<div class="abs vl" style="left:1225px;top:578px;height:273px"></div>
<div class="abs vl" style="left:1340px;top:578px;height:273px"></div>
<div class="abs wbtn" style="left:33px;top:938px;width:163px;height:24px;font-size:11px;line-height:24px">ЗАДАЙТЕ СВОЙ ВОПРОС</div>
<div class="abs" style="left:0;top:974px;width:1366px;height:1px;background:#dcdcdc"></div>
<div id="foot">
<div class="abs" id="cp" style="left:24px;top:991px;font-size:11px;line-height:16px;letter-spacing:.38px;color:#4a4a4a">© Marketgid 2017 Все права защищены</div>
<a class="abs" id="f1" style="left:942px;top:991px;font-size:11px;line-height:16px;letter-spacing:.27px;text-decoration:underline">Главная страница Маркетгид</a>
<a class="abs" id="f2" style="left:1117px;top:991px;font-size:11px;line-height:16px;letter-spacing:.27px;text-decoration:underline">База знаний</a>
<a class="abs" id="f3" style="left:1203px;top:991px;font-size:11px;line-height:16px;letter-spacing:.27px;text-decoration:underline">Условия сотрудничества</a>
</div>
</body>
</html>
